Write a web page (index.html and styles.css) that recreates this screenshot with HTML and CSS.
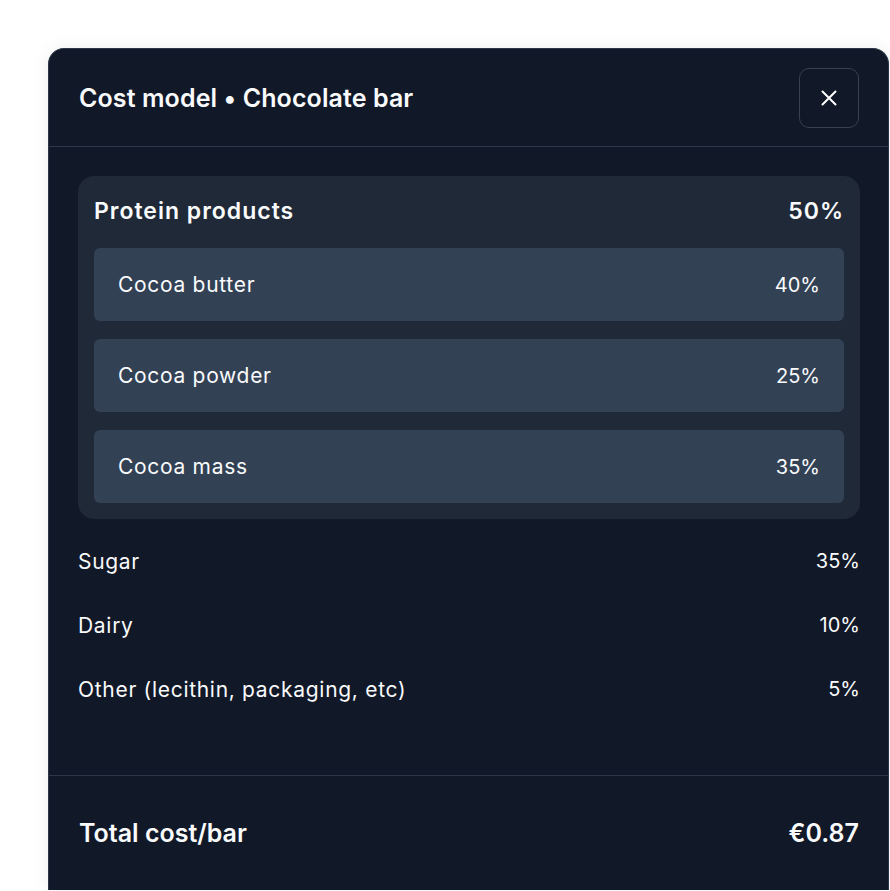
FILE: index.html
```html
<!DOCTYPE html>
<html lang="en">
<head>
<meta charset="utf-8">
<link rel="stylesheet" href="styles.css">
</head>
<body>
<div class="panel">
  <div class="header">
    <h1 class="title">Cost model • Chocolate bar</h1>
    <button class="close" aria-label="Close">
      <svg width="20" height="20" viewBox="0 0 20 20" fill="none" stroke="#ffffff" stroke-width="2" stroke-linecap="round"><path d="M3.5 3.5L16.5 16.5M16.5 3.5L3.5 16.5"/></svg>
    </button>
  </div>
  <div class="content">
    <div class="group">
      <div class="group-head"><span>Protein products</span><span>50%</span></div>
      <div class="item"><span>Cocoa butter</span><span class="num">40%</span></div>
      <div class="item"><span>Cocoa powder</span><span class="num">25%</span></div>
      <div class="item"><span>Cocoa mass</span><span class="num">35%</span></div>
    </div>
    <div class="row"><span>Sugar</span><span class="num">35%</span></div>
    <div class="row"><span>Dairy</span><span class="num">10%</span></div>
    <div class="row"><span>Other (lecithin, packaging, etc)</span><span class="num">5%</span></div>
  </div>
  <div class="footer"><span>Total cost/bar</span><span>€0.87</span></div>
</div>
</body>
</html>
```
FILE: styles.css
```css
html, body { margin: 0; padding: 0; background: #ffffff; }
body { width: 890px; height: 891px; overflow: hidden; font-family: "Inter", "Liberation Sans", sans-serif; color: #f9fafb; }
.panel {
  margin: 48px 0 0 48px;
  width: 841px;
  height: 842px;
  box-sizing: border-box;
  background: #111827;
  border: 1px solid #2b3748;
  border-bottom: none;
  border-radius: 16px 16px 0 0;
  box-shadow: 0 0 18px rgba(0,0,0,0.07);
  display: flex;
  flex-direction: column;
}
.header {
  height: 98px;
  flex: none;
  box-sizing: border-box;
  display: flex;
  align-items: center;
  justify-content: space-between;
  padding: 0 29px 0 30px;
  border-bottom: 1px solid #2b3748;
}
.title { margin: 0; font-size: 25px; font-weight: 600; letter-spacing: 0.1px; }
.close {
  width: 60px; height: 60px;
  box-sizing: border-box;
  border: 1px solid #374151;
  border-radius: 10px;
  background: transparent;
  display: flex; align-items: center; justify-content: center;
  padding: 0;
}
.content { padding: 29px 28px 0 29px; }
.group {
  background: #1f2937;
  border-radius: 16px;
  padding: 16px;
  display: flex;
  flex-direction: column;
  gap: 18px;
}
.group-head {
  display: flex; justify-content: space-between; align-items: center;
  height: 38px;
  font-size: 23px; font-weight: 600;
  letter-spacing: 1px;
}
.item {
  height: 73px;
  background: #334155;
  border-radius: 6px;
  display: flex; align-items: center; justify-content: space-between;
  padding: 0 24px;
  font-size: 21px;
  letter-spacing: 0.7px;
}
.row {
  height: 64px;
  display: flex; align-items: center; justify-content: space-between;
  font-size: 21px;
  letter-spacing: 0.7px;
}
.num { letter-spacing: 0; font-size: 20px; }
.group + .row { margin-top: 10px; }
.footer {
  margin-top: 54px;
  border-top: 1px solid #2b3748;
  flex: 1;
  display: flex; align-items: center; justify-content: space-between;
  padding: 0 29px 0 30px;
  font-size: 25px; font-weight: 600;
}
```
